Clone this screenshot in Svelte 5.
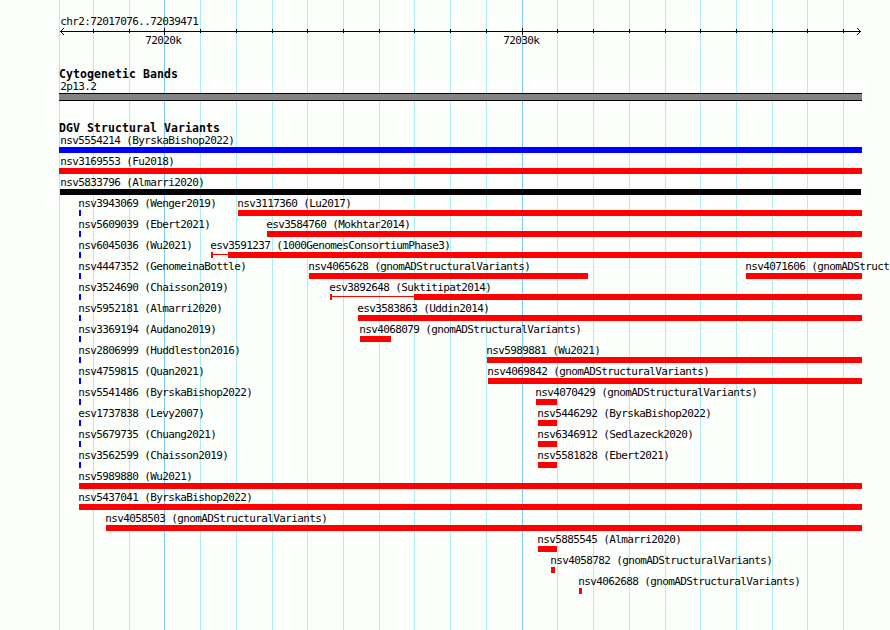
<script>
  const gridLines = [59, 93, 129, 164, 200, 236, 272, 307, 343, 379, 414, 450, 486, 522, 557, 593, 629, 665, 700, 736, 772, 807, 843];
  const major = [164, 522];
  const END = 862;

  const f = (name, start, end = END, color = 'red', box = start) => ({ name, start, end, color, box });
  const small = (name) => f(name, 79, 81, 'blue');

  const rows = [
    [{ ...f('nsv5554214 (ByrskaBishop2022)', 59, END, 'blue'), label: 60 }],
    [{ ...f('nsv3169553 (Fu2018)', 59), label: 60 }],
    [{ ...f('nsv5833796 (Almarri2020)', 60, 861, 'black'), label: 60 }],
    [small('nsv3943069 (Wenger2019)'), f('nsv3117360 (Lu2017)', 238)],
    [small('nsv5609039 (Ebert2021)'), f('esv3584760 (Mokhtar2014)', 267)],
    [small('nsv6045036 (Wu2021)'), f('esv3591237 (1000GenomesConsortiumPhase3)', 211, END, 'red', 228)],
    [small('nsv4447352 (GenomeinaBottle)'), f('nsv4065628 (gnomADStructuralVariants)', 309, 588), f('nsv4071606 (gnomADStruct', 746)],
    [small('nsv3524690 (Chaisson2019)'), f('esv3892648 (Suktitipat2014)', 330, END, 'red', 414)],
    [small('nsv5952181 (Almarri2020)'), f('esv3583863 (Uddin2014)', 358)],
    [small('nsv3369194 (Audano2019)'), f('nsv4068079 (gnomADStructuralVariants)', 360, 391)],
    [small('nsv2806999 (Huddleston2016)'), f('nsv5989881 (Wu2021)', 487)],
    [small('nsv4759815 (Quan2021)'), f('nsv4069842 (gnomADStructuralVariants)', 488)],
    [small('nsv5541486 (ByrskaBishop2022)'), f('nsv4070429 (gnomADStructuralVariants)', 536, 557)],
    [small('esv1737838 (Levy2007)'), f('nsv5446292 (ByrskaBishop2022)', 538, 557)],
    [small('nsv5679735 (Chuang2021)'), f('nsv6346912 (Sedlazeck2020)', 538, 557)],
    [small('nsv3562599 (Chaisson2019)'), f('nsv5581828 (Ebert2021)', 538, 557)],
    [f('nsv5989880 (Wu2021)', 79)],
    [f('nsv5437041 (ByrskaBishop2022)', 79)],
    [f('nsv4058503 (gnomADStructuralVariants)', 106)],
    [f('nsv5885545 (Almarri2020)', 538, 557)],
    [f('nsv4058782 (gnomADStructuralVariants)', 551, 555)],
    [f('nsv4062688 (gnomADStructuralVariants)', 579, 582)]
  ];
</script>

<main class="browser">
  <svg class="grid" width="890" height="630" shape-rendering="crispEdges" aria-hidden="true">
    {#each gridLines as x}
      <rect {x} y="0" width="1" height="630" class:major={major.includes(x)} />
    {/each}
  </svg>

  <div class="content">
    <header>
      <div class="label region">chr2:72017076..72039471</div>
      <svg class="axis" width="890" height="7" shape-rendering="crispEdges" aria-hidden="true">
        <rect x="60" y="3" width="801" height="1" />
        {#each gridLines.slice(1) as x}
          <rect {x} y={major.includes(x) ? 0 : 1} width="1" height={major.includes(x) ? 7 : 4} />
        {/each}
        {#each [1, 2, 3] as d}
          <rect x={60 + d} y={3 - d} width="1" height="1" />
          <rect x={60 + d} y={3 + d} width="1" height="1" />
          <rect x={860 - d} y={3 - d} width="1" height="1" />
          <rect x={860 - d} y={3 + d} width="1" height="1" />
        {/each}
      </svg>
      <div class="scale">
        <span class="label">72020k</span>
        <span class="label">72030k</span>
      </div>
    </header>

    <section class="cyto">
      <h2>Cytogenetic Bands</h2>
      <div class="label band-name">2p13.2</div>
      <div class="band"></div>
    </section>

    <section class="variants">
      <h2>DGV Structural Variants</h2>
      {#each rows as row}
        <div class="row">
          {#each row as v}
            <div class="feature">
              <div class="label" style:margin-left="{(v.label ?? v.start - 1) + 0.2}px">{v.name}</div>
              <div class="glyph {v.color}" style:margin-left="{v.start}px" style:width="{v.end - v.start}px">
                {#if v.box > v.start}
                  <span class="cap"></span>
                  <span class="thin" style:width="{v.box - v.start - 2}px"></span>
                {/if}
                <span class="bar"></span>
              </div>
            </div>
          {/each}
        </div>
      {/each}
    </section>
  </div>
</main>

<style>
  :global(body) {
    margin: 0;
    background: #fcfefc;
  }
  .browser {
    position: relative;
    width: 890px;
    height: 630px;
    overflow: hidden;
    background: #fcfefc;
    color: #040204;
    font-family: 'DejaVu Sans Mono', monospace;
    font-size: 11px;
  }
  .grid {
    position: absolute;
    inset: 0;
    fill: #aceeec;
  }
  .grid .major {
    fill: #7ccaec;
  }
  .content {
    position: relative;
    display: flex;
    flex-direction: column;
    width: 890px;
  }
  .label {
    height: 14px;
    line-height: 16px;
    letter-spacing: -0.623px;
    white-space: pre;
  }
  h2 {
    margin: 0 0 0 59px;
    height: 12px;
    line-height: 14px;
    font-size: 11.5px;
    font-weight: bold;
    letter-spacing: 0.077px;
    white-space: pre;
  }
  header {
    height: 67px;
    padding-top: 14px;
    box-sizing: border-box;
  }
  .region {
    margin-left: 60.2px;
  }
  .axis {
    display: block;
    fill: #040204;
  }
  .scale {
    display: flex;
    margin: -2px 0 0 145.2px;
    gap: 322px;
  }
  .scale .label {
    width: 36px;
  }
  .cyto {
    height: 54px;
  }
  .band-name {
    margin-left: 60.2px;
  }
  .band {
    margin-left: 59px;
    width: 803px;
    height: 8px;
    box-sizing: border-box;
    background: #848284;
    border: solid #040204;
    border-width: 1px 0;
  }
  .row {
    display: grid;
    height: 21px;
  }
  .feature {
    grid-area: 1 / 1;
    min-width: 0;
  }
  .glyph {
    display: flex;
    height: 6px;
  }
  .red {
    color: #ff0000;
  }
  .blue {
    color: #0000ff;
  }
  .black {
    color: #040204;
  }
  .cap {
    width: 2px;
    background: currentColor;
  }
  .thin {
    height: 1px;
    margin-top: 2px;
    background: currentColor;
  }
  .bar {
    flex: 1;
    background: currentColor;
  }
</style>
